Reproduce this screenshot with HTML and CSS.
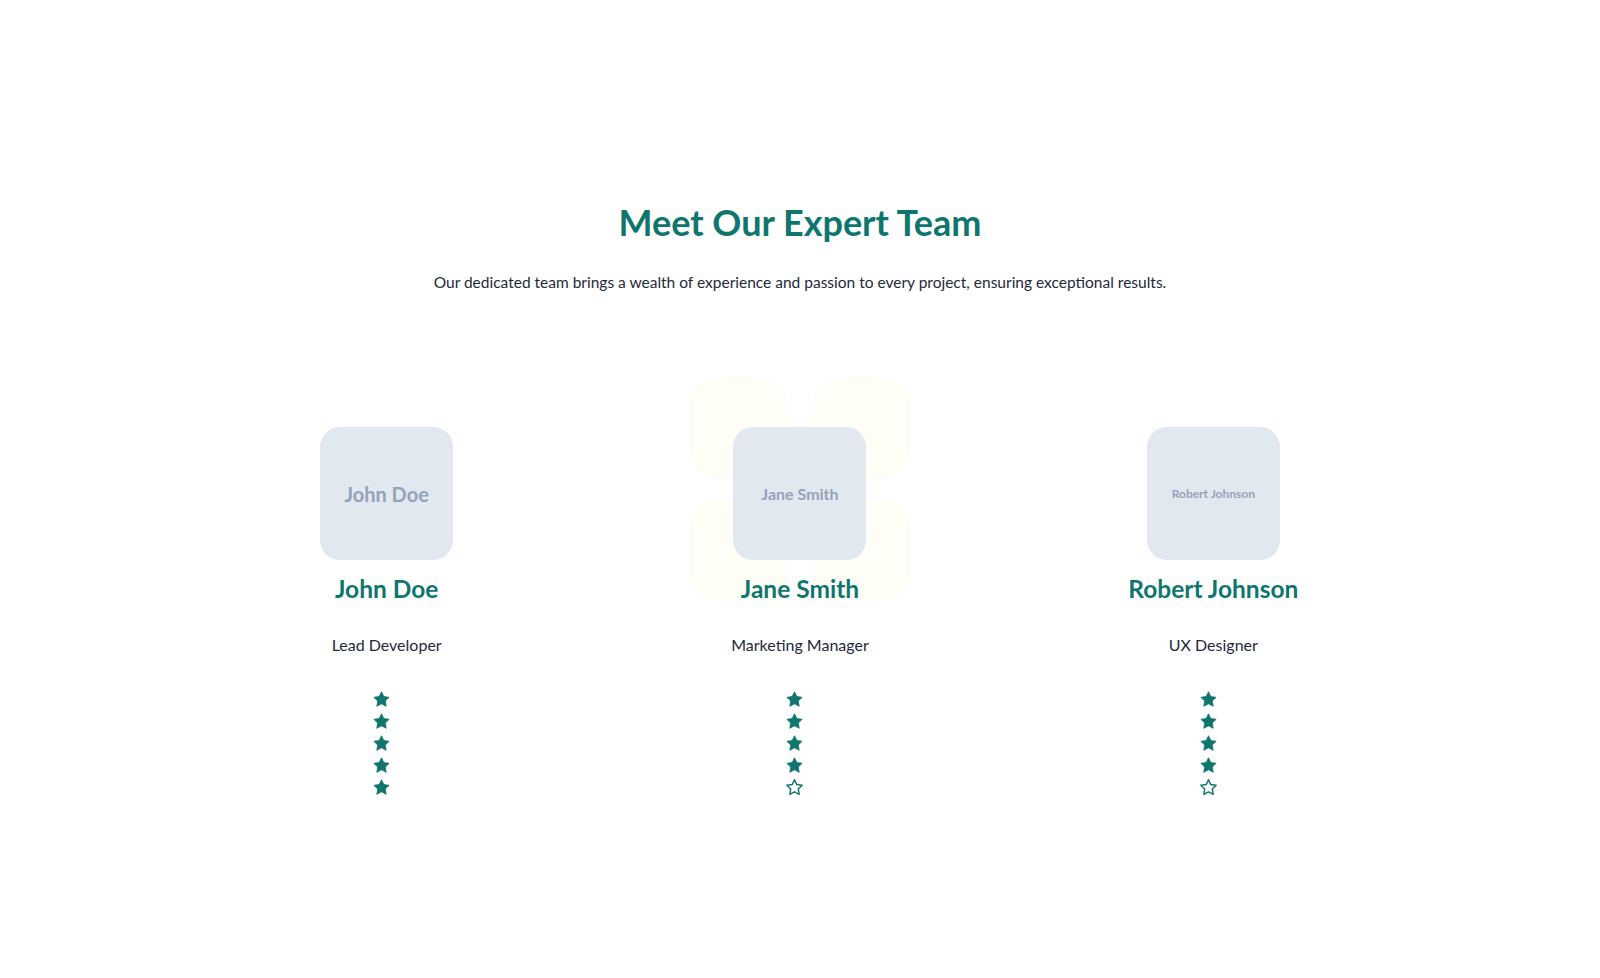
FILE: index.html
```html
<!DOCTYPE html>
<html>
  <head>
    <meta charset="UTF-8">
    <title>Meet Our Expert Team</title>
    <link rel="stylesheet" href="styles.css">
  </head>
  <body>
    <section class="team">
      <h1 class="team-title">Meet Our Expert Team</h1>
      <p class="team-lead">Our dedicated team brings a wealth of experience and passion to every project, ensuring exceptional results.</p>

      <div class="cards">
        <div class="card">
          <div class="avatar"><span class="avatar-label big">John Doe</span></div>
          <h2 class="name">John Doe</h2>
          <p class="role">Lead Developer</p>
          <div class="stars">
            <svg class="star" viewBox="0 0 24 24"><path class="fill" d="M12 2.2l2.95 6.1 6.7.95-4.85 4.7 1.15 6.65L12 17.45 6.05 20.6l1.15-6.65-4.85-4.7 6.7-.95z"/></svg>
            <svg class="star" viewBox="0 0 24 24"><path class="fill" d="M12 2.2l2.95 6.1 6.7.95-4.85 4.7 1.15 6.65L12 17.45 6.05 20.6l1.15-6.65-4.85-4.7 6.7-.95z"/></svg>
            <svg class="star" viewBox="0 0 24 24"><path class="fill" d="M12 2.2l2.95 6.1 6.7.95-4.85 4.7 1.15 6.65L12 17.45 6.05 20.6l1.15-6.65-4.85-4.7 6.7-.95z"/></svg>
            <svg class="star" viewBox="0 0 24 24"><path class="fill" d="M12 2.2l2.95 6.1 6.7.95-4.85 4.7 1.15 6.65L12 17.45 6.05 20.6l1.15-6.65-4.85-4.7 6.7-.95z"/></svg>
            <svg class="star" viewBox="0 0 24 24"><path class="fill" d="M12 2.2l2.95 6.1 6.7.95-4.85 4.7 1.15 6.65L12 17.45 6.05 20.6l1.15-6.65-4.85-4.7 6.7-.95z"/></svg>
          </div>
        </div>

        <div class="card">
          <div class="deco">
            <span></span><span></span><span></span><span></span>
          </div>
          <div class="avatar"><span class="avatar-label mid">Jane Smith</span></div>
          <h2 class="name">Jane Smith</h2>
          <p class="role">Marketing Manager</p>
          <div class="stars">
            <svg class="star" viewBox="0 0 24 24"><path class="fill" d="M12 2.2l2.95 6.1 6.7.95-4.85 4.7 1.15 6.65L12 17.45 6.05 20.6l1.15-6.65-4.85-4.7 6.7-.95z"/></svg>
            <svg class="star" viewBox="0 0 24 24"><path class="fill" d="M12 2.2l2.95 6.1 6.7.95-4.85 4.7 1.15 6.65L12 17.45 6.05 20.6l1.15-6.65-4.85-4.7 6.7-.95z"/></svg>
            <svg class="star" viewBox="0 0 24 24"><path class="fill" d="M12 2.2l2.95 6.1 6.7.95-4.85 4.7 1.15 6.65L12 17.45 6.05 20.6l1.15-6.65-4.85-4.7 6.7-.95z"/></svg>
            <svg class="star" viewBox="0 0 24 24"><path class="fill" d="M12 2.2l2.95 6.1 6.7.95-4.85 4.7 1.15 6.65L12 17.45 6.05 20.6l1.15-6.65-4.85-4.7 6.7-.95z"/></svg>
            <svg class="star" viewBox="0 0 24 24"><path class="empty" d="M12 2.2l2.95 6.1 6.7.95-4.85 4.7 1.15 6.65L12 17.45 6.05 20.6l1.15-6.65-4.85-4.7 6.7-.95z"/></svg>
          </div>
        </div>

        <div class="card">
          <div class="avatar"><span class="avatar-label small">Robert Johnson</span></div>
          <h2 class="name">Robert Johnson</h2>
          <p class="role">UX Designer</p>
          <div class="stars">
            <svg class="star" viewBox="0 0 24 24"><path class="fill" d="M12 2.2l2.95 6.1 6.7.95-4.85 4.7 1.15 6.65L12 17.45 6.05 20.6l1.15-6.65-4.85-4.7 6.7-.95z"/></svg>
            <svg class="star" viewBox="0 0 24 24"><path class="fill" d="M12 2.2l2.95 6.1 6.7.95-4.85 4.7 1.15 6.65L12 17.45 6.05 20.6l1.15-6.65-4.85-4.7 6.7-.95z"/></svg>
            <svg class="star" viewBox="0 0 24 24"><path class="fill" d="M12 2.2l2.95 6.1 6.7.95-4.85 4.7 1.15 6.65L12 17.45 6.05 20.6l1.15-6.65-4.85-4.7 6.7-.95z"/></svg>
            <svg class="star" viewBox="0 0 24 24"><path class="fill" d="M12 2.2l2.95 6.1 6.7.95-4.85 4.7 1.15 6.65L12 17.45 6.05 20.6l1.15-6.65-4.85-4.7 6.7-.95z"/></svg>
            <svg class="star" viewBox="0 0 24 24"><path class="empty" d="M12 2.2l2.95 6.1 6.7.95-4.85 4.7 1.15 6.65L12 17.45 6.05 20.6l1.15-6.65-4.85-4.7 6.7-.95z"/></svg>
          </div>
        </div>
      </div>
    </section>
  </body>
</html>
```

FILE: styles.css
```css
body {
    margin: 0;
    background: #ffffff;
    font-family: Lato, "Noto Sans", sans-serif;
    color: #1e293b;
}

.team {
    padding: 202px 0 120px 0;
    text-align: center;
}

.team-title {
    margin: 0;
    font-size: 36px;
    line-height: 40px;
    font-weight: 700;
    color: #0f766e;
}

.team-lead {
    margin: 28px 0 0 0;
    font-size: 15.5px;
    line-height: 24px;
}

.cards {
    max-width: 1240px;
    margin: 133px auto 0 auto;
    display: grid;
    grid-template-columns: repeat(3, 1fr);
}

.card {
    position: relative;
    display: flex;
    flex-direction: column;
    align-items: center;
}

/* pale squares behind the middle card */
.deco {
    position: absolute;
    top: -49px;
    left: 50%;
    margin-left: -111px;
    width: 222px;
    display: grid;
    grid-template-columns: 100px 100px;
    gap: 22px;
}
.deco span {
    height: 100px;
    border-radius: 30px;
    background: #fefdf6;
}

.avatar {
    position: relative;
    width: 133px;
    height: 133px;
    border-radius: 20px;
    background: #e2e8f0;
    display: flex;
    align-items: center;
    justify-content: center;
}

.avatar-label {
    font-weight: 700;
    color: #94a3b8;
}
.avatar-label.big { font-size: 20px; }
.avatar-label.mid { font-size: 16px; }
.avatar-label.small { font-size: 12px; }

.name {
    position: relative;
    margin: 13px 0 0 0;
    font-size: 24.5px;
    line-height: 32px;
    font-weight: 700;
    color: #0f766e;
}

.role {
    margin: 28px 0 0 0;
    font-size: 16px;
    line-height: 24px;
}

.stars {
    margin-top: 33px;
    display: flex;
    flex-direction: column;
    align-items: center;
    gap: 3px;
}

.star {
    display: block;
    width: 19px;
    height: 19px;
    margin-right: 10px;
}
.star .fill { fill: #0f766e; stroke: #0f766e; stroke-width: 1; stroke-linejoin: round; }
.star .empty { fill: none; stroke: #0f766e; stroke-width: 1.8; stroke-linejoin: round; }
```
